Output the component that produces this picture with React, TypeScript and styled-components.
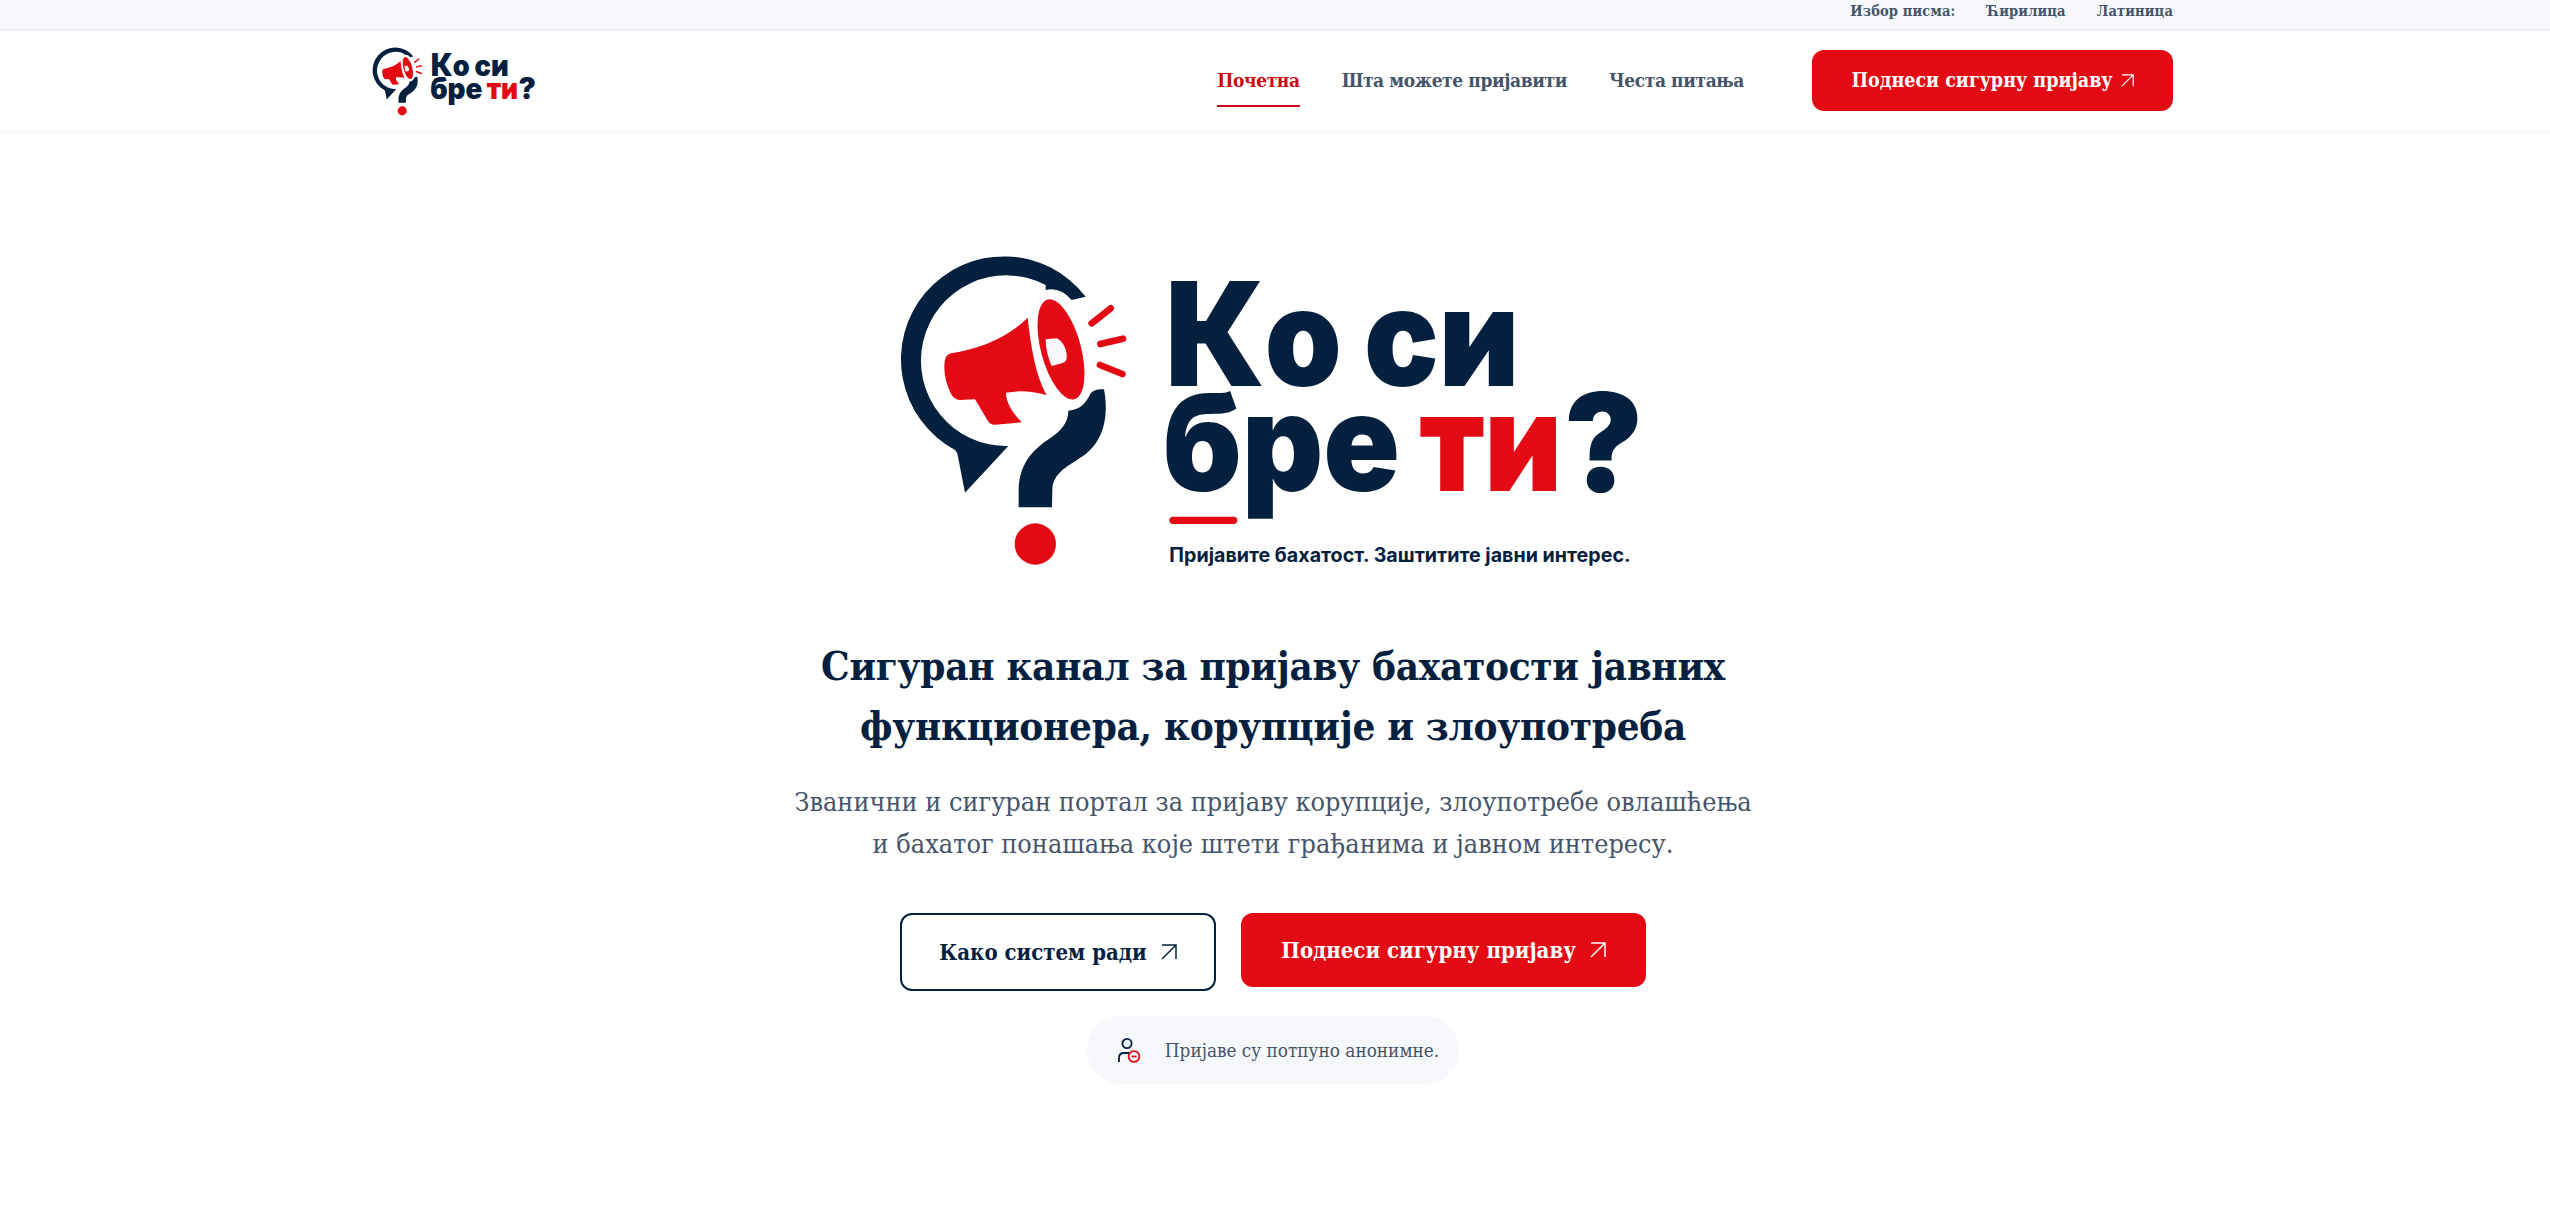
import styled, { createGlobalStyle } from "styled-components";

const NAVY = "#04203f";
const RED = "#e30a14";
const SLATE = "#44546a";
const SLAB = `"DejaVu Serif Condensed", "DejaVu Serif", serif`;

const GlobalStyle = createGlobalStyle`
  * { box-sizing: border-box; }
  html, body { margin: 0; background: #fff; }
  body { font-family: ${SLAB}; color: ${NAVY}; }
  a { text-decoration: none; color: inherit; }
`;

const Container = styled.div`
  width: 1800px;
  margin: 0 auto;
  padding-right: 2px;
  display: flex;
  align-items: center;
`;

const TopBar = styled.div`
  height: 30px;
  background: #f6f8fb;
  border-bottom: 1px solid #e6e9ef;
`;

const ScriptRow = styled(Container)`
  height: 20px;
  justify-content: flex-end;
  gap: 31px;
  font-size: 14.5px;
  letter-spacing: 0.15px;
  font-weight: 700;
  color: ${SLATE};
`;

const Header = styled.header`
  height: 100px;
  background: #fff;
  box-shadow: 0 2px 6px rgba(10, 30, 60, 0.06);
`;

const HeaderRow = styled(Container)`
  height: 100%;
  justify-content: space-between;
`;

const SmallLogo = styled.a`
  display: block;
  width: 173px;
  margin-left: -7px;
  margin-top: 2px;
  line-height: 0;
`;

const Nav = styled.nav`
  display: flex;
  align-items: center;
`;

const NavLink = styled.a<{ $active?: boolean }>`
  margin-right: 42px;
  padding: 16px 0 14px;
  font-size: 19px;
  line-height: 22px;
  letter-spacing: -0.4px;
  font-weight: 700;
  color: ${({ $active }) => ($active ? "#cc0a14" : SLATE)};
  border-bottom: 2px solid ${({ $active }) => ($active ? "#cc0a14" : "transparent")};
`;

const RedButton = styled.a<{ $big?: boolean }>`
  display: inline-flex;
  align-items: center;
  justify-content: center;
  gap: ${({ $big }) => ($big ? "14px" : "8px")};
  width: ${({ $big }) => ($big ? "405px" : "361px")};
  height: ${({ $big }) => ($big ? "74px" : "61px")};
  margin-left: ${({ $big }) => ($big ? "0" : "26px")};
  border-radius: 12px;
  background: ${RED};
  color: #fff;
  font-size: ${({ $big }) => ($big ? "22px" : "19.5px")};
  font-weight: 700;
`;

const Main = styled.main`
  display: flex;
  flex-direction: column;
  align-items: center;
  padding-right: 4px;
`;

const HeroLogo = styled.div`
  width: 786px;
  margin-top: 110px;
  line-height: 0;
`;

const Title = styled.h1`
  margin: 56px 0 0;
  font-size: 40px;
  line-height: 60px;
  letter-spacing: -0.3px;
  font-weight: 700;
  text-align: center;
  color: ${NAVY};
`;

const Lead = styled.p`
  margin: 25px 0 0;
  font-size: 26.8px;
  line-height: 42px;
  text-align: center;
  color: ${SLATE};
`;

const Actions = styled.div`
  display: flex;
  align-items: flex-start;
  gap: 25px;
  margin-top: 48px;
`;

const OutlineButton = styled.a`
  display: inline-flex;
  align-items: center;
  justify-content: center;
  gap: 14px;
  width: 316px;
  height: 78px;
  border: 2px solid ${NAVY};
  border-radius: 12px;
  color: ${NAVY};
  font-size: 22px;
  font-weight: 700;
`;

const AnonPill = styled.div`
  display: flex;
  align-items: center;
  gap: 22px;
  height: 68px;
  margin-top: 25px;
  padding: 0 20px 0 30px;
  border-radius: 34px;
  background: #f6f8fb;
  color: ${SLATE};
  font-size: 18.8px;
`;

// each word is stretched to the width it has in the logo artwork
function LogoWord({ x, y, len, fill = NAVY, children }: { x: number; y: number; len: number; fill?: string; children: React.ReactNode }) {
  return (
    <text x={x} y={y} textLength={len} lengthAdjust="spacingAndGlyphs" fill={fill}>
      {children}
    </text>
  );
}

function Logo({ tagline }: { tagline?: boolean }) {
  return (
    <svg viewBox="0 0 2358 1020" width="100%" role="img" aria-label="Ко си бре ти?">
      <path
        fill={NAVY}
        d="M617 170 A309 309 0 1 0 225 630 Q232 636 234 650 L255 758 L385 618 A256 256 0 1 1 497 135 L497 150 Q540 140 575 180 Z"
      />
      <path
        fill={RED}
        d="M443 233 C455 340 470 410 500 465 C460 455 420 450 378 458 C378 490 400 520 425 547 L345 554 Q330 555 322 540 L285 478 L240 480 Q222 480 212 460 C198 430 190 400 194 365 Q196 345 212 340 C300 325 380 295 443 233 Z"
      />
      <ellipse cx="543" cy="328" rx="60" ry="155" transform="rotate(-15 543 328)" fill={RED} />
      <path fill="#f6f8fb" d="M497 298 L530 295 C552 305 562 335 560 355 Q558 366 548 369 L515 378 C503 352 497 325 497 298 Z" />
      <g stroke={RED} strokeWidth="20" strokeLinecap="round">
        <line x1="635" y1="250" x2="692" y2="205" />
        <line x1="661" y1="312" x2="729" y2="296" />
        <line x1="660" y1="375" x2="727" y2="402" />
      </g>
      <path
        fill={NAVY}
        d="M632 460 Q645 445 672 448 C684 510 680 590 620 640 C580 672 522 690 517 745 L516 802 L416 802 L416 745 C420 660 470 622 510 595 C540 575 565 550 565 512 C600 510 618 490 632 460 Z"
      />
      <circle cx="466" cy="912" r="62" fill={RED} />
      <g fontFamily='Inter, "Liberation Sans", sans-serif' fontWeight="900" fontSize="405">
        <LogoWord x={855} y={437} len={530}>
          <tspan fontSize="432">К</tspan>о
        </LogoWord>
        <LogoWord x={1452} y={437} len={466}>си</LogoWord>
        <LogoWord x={848} y={752} len={712}>бре</LogoWord>
        <LogoWord x={1618} y={752} len={428} fill={RED}>ти</LogoWord>
        <LogoWord x={2052} y={752} len={238}>?</LogoWord>
      </g>
      {tagline && (
        <>
          <rect x="868" y="830" width="204" height="22" rx="11" fill={RED} />
          <text x="868" y="965" fontFamily='Inter, "Liberation Sans", sans-serif' fontWeight="700" fontSize="59" fill={NAVY}>
            Пријавите бахатост. Заштитите јавни интерес.
          </text>
        </>
      )}
    </svg>
  );
}

function ArrowIcon({ size }: { size: number }) {
  return (
    <svg width={size} height={size} viewBox="0 0 16 16" fill="none" stroke="currentColor" strokeWidth="1.5">
      <path d="M1 15 L15 1 M1 1 H15 V15" />
    </svg>
  );
}

function AnonIcon() {
  return (
    <svg width="26" height="28" viewBox="0 0 26 28" fill="none">
      <circle cx="10" cy="7.5" r="4.6" stroke={NAVY} strokeWidth="1.8" />
      <path d="M2 26 V22 Q2 17 7 17 H12" stroke={NAVY} strokeWidth="1.8" />
      <circle cx="17" cy="20.5" r="5.4" fill="#f6f8fb" stroke={RED} strokeWidth="1.8" />
      <line x1="14.5" y1="20.5" x2="19.5" y2="20.5" stroke={RED} strokeWidth="1.8" />
    </svg>
  );
}

export default function App() {
  return (
    <>
      <GlobalStyle />
      <TopBar>
        <ScriptRow>
          <span>Избор писма:</span>
          <a href="#">Ћирилица</a>
          <a href="#">Латиница</a>
        </ScriptRow>
      </TopBar>
      <Header>
        <HeaderRow>
          <SmallLogo href="#">
            <Logo />
          </SmallLogo>
          <Nav>
            <NavLink href="#" $active>Почетна</NavLink>
            <NavLink href="#">Шта можете пријавити</NavLink>
            <NavLink href="#">Честа питања</NavLink>
            <RedButton href="#">
              Поднеси сигурну пријаву
              <ArrowIcon size={13} />
            </RedButton>
          </Nav>
        </HeaderRow>
      </Header>
      <Main>
        <HeroLogo>
          <Logo tagline />
        </HeroLogo>
        <Title>
          Сигуран канал за пријаву бахатости јавних
          <br />
          функционера, корупције и злоупотреба
        </Title>
        <Lead>
          Званични и сигуран портал за пријаву корупције, злоупотребе овлашћења
          <br />
          и бахатог понашања које штети грађанима и јавном интересу.
        </Lead>
        <Actions>
          <OutlineButton href="#">
            Како систем ради
            <ArrowIcon size={16} />
          </OutlineButton>
          <RedButton href="#" $big>
            Поднеси сигурну пријаву
            <ArrowIcon size={16} />
          </RedButton>
        </Actions>
        <AnonPill>
          <AnonIcon />
          Пријаве су потпуно анонимне.
        </AnonPill>
      </Main>
    </>
  );
}
